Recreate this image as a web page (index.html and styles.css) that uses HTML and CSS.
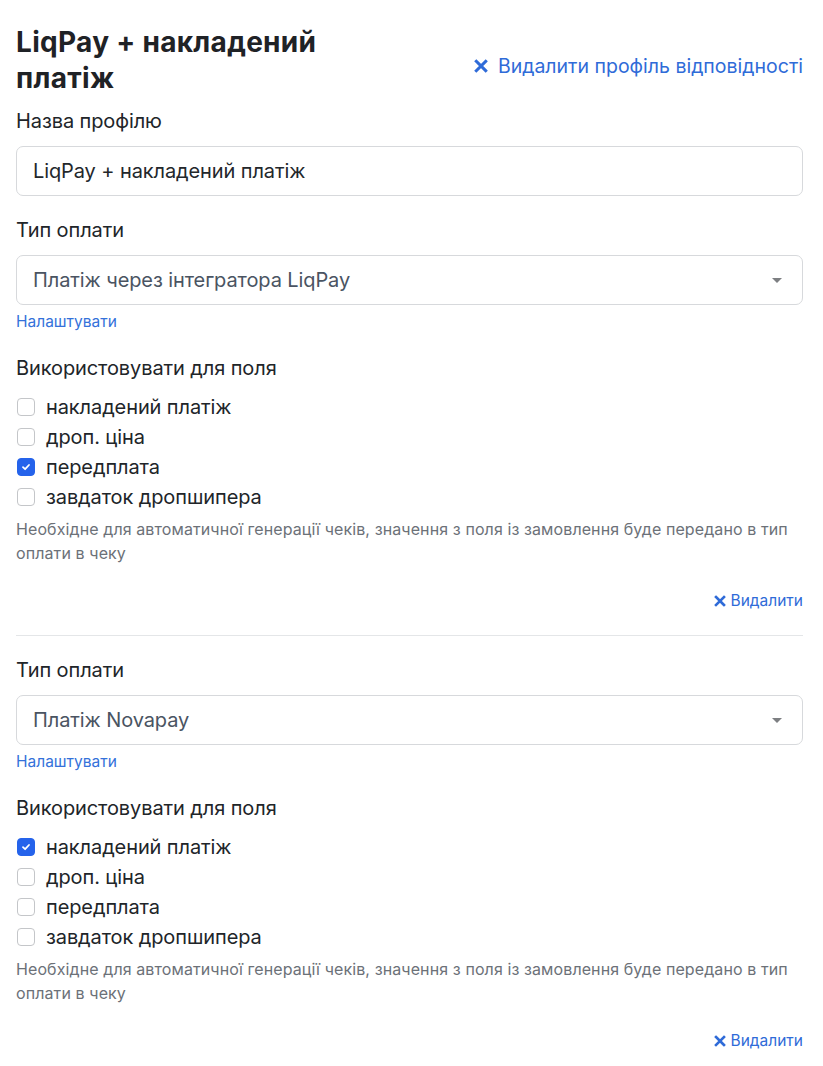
FILE: index.html
```html
<!DOCTYPE html>
<html lang="uk">
<head>
<meta charset="utf-8">
<title>LiqPay + накладений платіж</title>
<link rel="stylesheet" href="styles.css">
</head>
<body>
<div class="page">
  <div class="header">
    <h1 class="title">LiqPay + накладений платіж</h1>
    <a class="link link-lg" href="#"><svg class="x-icon" viewBox="0 0 12 12" width="14" height="14"><path d="M2 2 L10 10 M10 2 L2 10" stroke="currentColor" stroke-width="2.6" stroke-linecap="square"/></svg>Видалити профіль відповідності</a>
  </div>

  <div class="label">Назва профілю</div>
  <div class="input input-dark">LiqPay + накладений платіж</div>

  <section class="block">
    <div class="label">Тип оплати</div>
    <div class="input select">Платіж через інтегратора LiqPay<span class="caret"></span></div>
    <a class="link link-sm" href="#">Налаштувати</a>
    <div class="label label-gap2">Використовувати для поля</div>
    <ul class="checks">
      <li><span class="box"></span>накладений платіж</li>
      <li><span class="box"></span>дроп. ціна</li>
      <li><span class="box checked"><svg viewBox="0 0 12 12" width="12" height="12"><path d="M3 6.2 L5.1 8.2 L9 4" fill="none" stroke="#fff" stroke-width="1.8" stroke-linecap="round" stroke-linejoin="round"/></svg></span>передплата</li>
      <li><span class="box"></span>завдаток дропшипера</li>
    </ul>
    <p class="help">Необхідне для автоматичної генерації чеків, значення з поля із замовлення буде передано в тип оплати в чеку</p>
    <div class="actions"><a class="link link-md" href="#"><svg class="x-icon" viewBox="0 0 12 12" width="12" height="12"><path d="M2 2 L10 10 M10 2 L2 10" stroke="currentColor" stroke-width="2.6" stroke-linecap="square"/></svg>Видалити</a></div>
  </section>

  <hr class="divider">

  <section class="block">
    <div class="label">Тип оплати</div>
    <div class="input select">Платіж Novapay<span class="caret"></span></div>
    <a class="link link-sm" href="#">Налаштувати</a>
    <div class="label label-gap2">Використовувати для поля</div>
    <ul class="checks">
      <li><span class="box checked"><svg viewBox="0 0 12 12" width="12" height="12"><path d="M3 6.2 L5.1 8.2 L9 4" fill="none" stroke="#fff" stroke-width="1.8" stroke-linecap="round" stroke-linejoin="round"/></svg></span>накладений платіж</li>
      <li><span class="box"></span>дроп. ціна</li>
      <li><span class="box"></span>передплата</li>
      <li><span class="box"></span>завдаток дропшипера</li>
    </ul>
    <p class="help">Необхідне для автоматичної генерації чеків, значення з поля із замовлення буде передано в тип оплати в чеку</p>
    <div class="actions"><a class="link link-md" href="#"><svg class="x-icon" viewBox="0 0 12 12" width="12" height="12"><path d="M2 2 L10 10 M10 2 L2 10" stroke="currentColor" stroke-width="2.6" stroke-linecap="square"/></svg>Видалити</a></div>
  </section>
</div>
</body>
</html>
```
FILE: styles.css
```css
* { box-sizing: border-box; }
html, body { margin: 0; padding: 0; background: #fff; }
body {
  font-family: Inter, "Noto Sans", "Liberation Sans", sans-serif;
  color: #212529;
}
.page {
  padding: 24px 20px 16px 16px;
}
.header {
  display: flex;
  justify-content: space-between;
  align-items: center;
}
.title {
  margin: 0;
  font-size: 28px;
  line-height: 36px;
  font-weight: 700;
  letter-spacing: 0.3px;
  max-width: 340px;
  color: #1f2226;
}
.link {
  color: #2f6bd8;
  text-decoration: none;
  display: inline-flex;
  align-items: center;
}
.link-lg {
  font-size: 19.5px;
  line-height: 27px;
  margin-top: 12px;
  gap: 10px;
}
.link-md {
  font-size: 15.5px;
  line-height: 24px;
  gap: 5px;
}
.link-sm {
  font-size: 15.5px;
  line-height: 21px;
  display: block;
  margin-top: 6px;
  color: #3471da;
}
.x-icon { flex: none; }
.label {
  font-size: 20px;
  line-height: 27px;
  letter-spacing: -0.1px;
  margin-top: 12px;
}
.block > .label:first-child { margin-top: 21px; }
.label-gap2 { margin-top: 23px; }
.input {
  margin-top: 11px;
  height: 50px;
  border: 1px solid #d7d9dc;
  border-radius: 7px;
  padding: 0 16px;
  display: flex;
  align-items: center;
  font-size: 20px;
  letter-spacing: -0.1px;
  color: #4a5462;
}
.input-dark { color: #23272b; }
.select { position: relative; }
.caret {
  position: absolute;
  right: 20px;
  top: 50%;
  margin-top: -2px;
  width: 0;
  height: 0;
  border-left: 5px solid transparent;
  border-right: 5px solid transparent;
  border-top: 5px solid #7d7f82;
}
.checks {
  list-style: none;
  margin: 10px 0 0;
  padding: 0;
}
.checks li {
  height: 30px;
  display: flex;
  align-items: center;
  font-size: 20px;
  letter-spacing: -0.1px;
  gap: 11px;
  padding-left: 1px;
}
.box {
  width: 18px;
  height: 18px;
  border: 1px solid #c4c6c9;
  border-radius: 4px;
  flex: none;
  display: flex;
  align-items: center;
  justify-content: center;
  background: #fff;
}
.box.checked {
  background: #2563eb;
  border-color: #2563eb;
}
.help {
  margin: 5px 0 0;
  font-size: 16px;
  line-height: 24px;
  letter-spacing: 0.1px;
  color: #6c7178;
}
.actions {
  display: flex;
  justify-content: flex-end;
  margin-top: 24px;
}
.divider {
  border: 0;
  border-top: 1px solid #e4e6e8;
  margin: 22px 0 0;
}
```
